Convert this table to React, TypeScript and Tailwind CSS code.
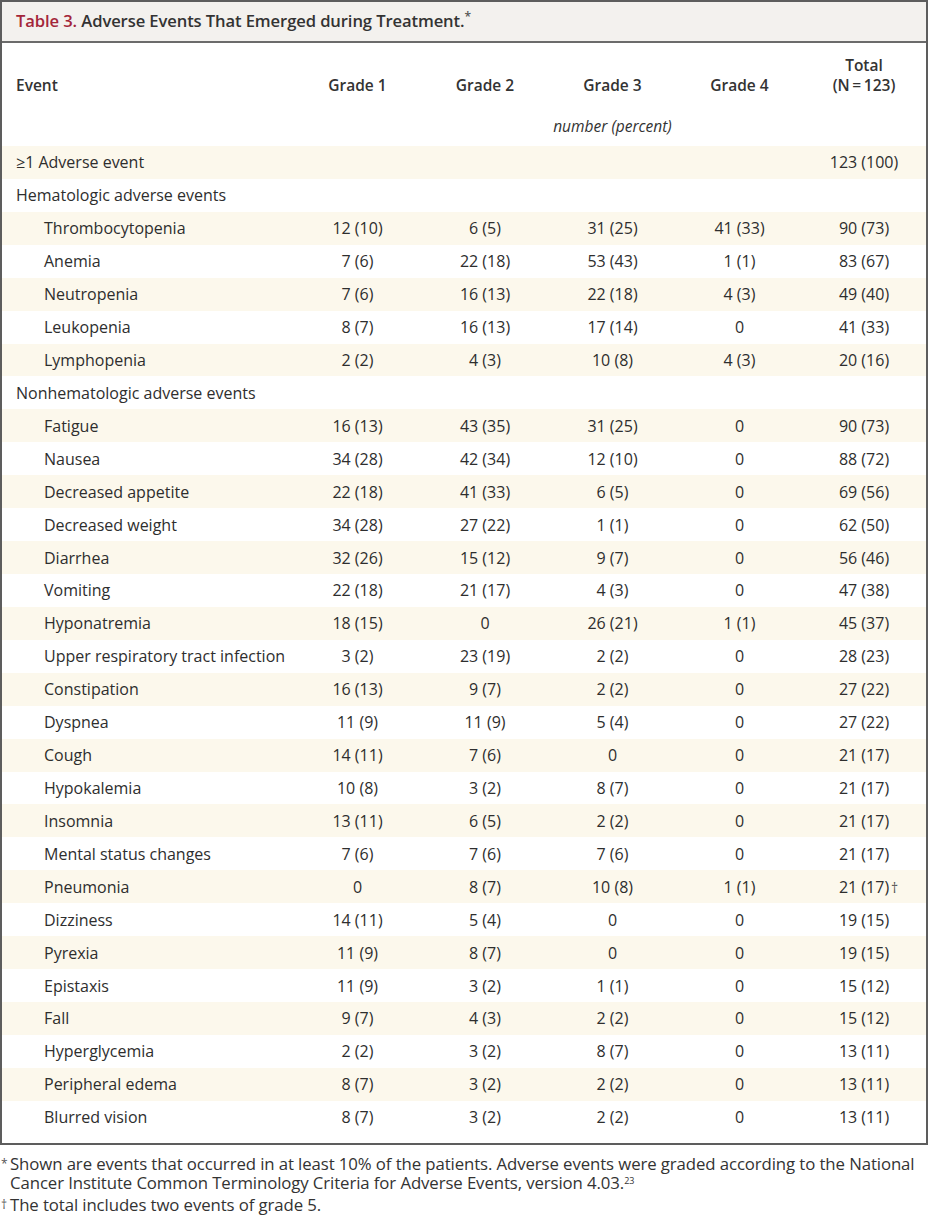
import React from "react";

type Row = { label: string; indent?: boolean; vals?: string[]; dagger?: boolean };

const rows: Row[] = [
  { label: "≥1 Adverse event", vals: ["", "", "", "", "123 (100)"] },
  { label: "Hematologic adverse events" },
  { label: "Thrombocytopenia", indent: true, vals: ["12 (10)", "6 (5)", "31 (25)", "41 (33)", "90 (73)"] },
  { label: "Anemia", indent: true, vals: ["7 (6)", "22 (18)", "53 (43)", "1 (1)", "83 (67)"] },
  { label: "Neutropenia", indent: true, vals: ["7 (6)", "16 (13)", "22 (18)", "4 (3)", "49 (40)"] },
  { label: "Leukopenia", indent: true, vals: ["8 (7)", "16 (13)", "17 (14)", "0", "41 (33)"] },
  { label: "Lymphopenia", indent: true, vals: ["2 (2)", "4 (3)", "10 (8)", "4 (3)", "20 (16)"] },
  { label: "Nonhematologic adverse events" },
  { label: "Fatigue", indent: true, vals: ["16 (13)", "43 (35)", "31 (25)", "0", "90 (73)"] },
  { label: "Nausea", indent: true, vals: ["34 (28)", "42 (34)", "12 (10)", "0", "88 (72)"] },
  { label: "Decreased appetite", indent: true, vals: ["22 (18)", "41 (33)", "6 (5)", "0", "69 (56)"] },
  { label: "Decreased weight", indent: true, vals: ["34 (28)", "27 (22)", "1 (1)", "0", "62 (50)"] },
  { label: "Diarrhea", indent: true, vals: ["32 (26)", "15 (12)", "9 (7)", "0", "56 (46)"] },
  { label: "Vomiting", indent: true, vals: ["22 (18)", "21 (17)", "4 (3)", "0", "47 (38)"] },
  { label: "Hyponatremia", indent: true, vals: ["18 (15)", "0", "26 (21)", "1 (1)", "45 (37)"] },
  { label: "Upper respiratory tract infection", indent: true, vals: ["3 (2)", "23 (19)", "2 (2)", "0", "28 (23)"] },
  { label: "Constipation", indent: true, vals: ["16 (13)", "9 (7)", "2 (2)", "0", "27 (22)"] },
  { label: "Dyspnea", indent: true, vals: ["11 (9)", "11 (9)", "5 (4)", "0", "27 (22)"] },
  { label: "Cough", indent: true, vals: ["14 (11)", "7 (6)", "0", "0", "21 (17)"] },
  { label: "Hypokalemia", indent: true, vals: ["10 (8)", "3 (2)", "8 (7)", "0", "21 (17)"] },
  { label: "Insomnia", indent: true, vals: ["13 (11)", "6 (5)", "2 (2)", "0", "21 (17)"] },
  { label: "Mental status changes", indent: true, vals: ["7 (6)", "7 (6)", "7 (6)", "0", "21 (17)"] },
  { label: "Pneumonia", indent: true, vals: ["0", "8 (7)", "10 (8)", "1 (1)", "21 (17)"], dagger: true },
  { label: "Dizziness", indent: true, vals: ["14 (11)", "5 (4)", "0", "0", "19 (15)"] },
  { label: "Pyrexia", indent: true, vals: ["11 (9)", "8 (7)", "0", "0", "19 (15)"] },
  { label: "Epistaxis", indent: true, vals: ["11 (9)", "3 (2)", "1 (1)", "0", "15 (12)"] },
  { label: "Fall", indent: true, vals: ["9 (7)", "4 (3)", "2 (2)", "0", "15 (12)"] },
  { label: "Hyperglycemia", indent: true, vals: ["2 (2)", "3 (2)", "8 (7)", "0", "13 (11)"] },
  { label: "Peripheral edema", indent: true, vals: ["8 (7)", "3 (2)", "2 (2)", "0", "13 (11)"] },
  { label: "Blurred vision", indent: true, vals: ["8 (7)", "3 (2)", "2 (2)", "0", "13 (11)"] },
];

const colW = ["w-[127px]", "w-[128px]", "w-[127px]", "w-[127px]", "w-[122px]"];

export default function App() {
  return (
    <div
      className="w-[930px] h-[1222px] bg-white text-[#2e2e2e]"
      style={{ fontFamily: '"Open Sans", "Noto Sans", sans-serif' }}
    >
      <div className="w-[928px] border-2 border-[#5d5d5d] bg-white">
        <div className="h-[41px] bg-[#f3f1ee] border-b-2 border-[#6b6b6b] flex items-center px-[14px]">
          <span className="text-[16.6px] font-semibold tracking-[-0.1px]">
            <span className="text-[#a3263a]">Table 3.</span>{" "}
            <span className="text-[#333]">Adverse Events That Emerged during Treatment.</span>
            <span className="text-[#555] text-[12px] align-top relative top-[-1px]">*</span>
          </span>
        </div>

        <div className="flex h-[70px] items-center text-[15.5px] font-semibold text-[#333]">
          <div className="w-[292px] pl-[14px] pt-[16px]">Event</div>
          <div className={`${colW[0]} text-center pt-[16px]`}>Grade 1</div>
          <div className={`${colW[1]} text-center pt-[16px]`}>Grade 2</div>
          <div className={`${colW[2]} text-center pt-[16px]`}>Grade 3</div>
          <div className={`${colW[3]} text-center pt-[16px]`}>Grade 4</div>
          <div className={`${colW[4]} text-center leading-[20px] relative top-[-3px]`}>
            <div>Total</div>
            <div>(N{"\u2009"}={"\u2009"}123)</div>
          </div>
        </div>
        <div className="flex h-[33px] items-center">
          <div className="w-[292px]" />
          <div className="w-[127px]" />
          <div className="w-[128px]" />
          <div className="w-[127px] text-center italic text-[15.5px] text-[#333] whitespace-nowrap relative top-[-3px]">
            number (percent)
          </div>
        </div>

        <div className="pb-[9px]">
          {rows.map((r, i) => (
            <div
              key={i}
              className={`flex h-[32.93px] items-center text-[16px] ${i % 2 === 0 ? "bg-[#fcf8ec]" : "bg-white"}`}
            >
              <div className={`w-[292px] whitespace-nowrap ${r.indent ? "pl-[42px]" : "pl-[14px]"}`}>{r.label}</div>
              {r.vals &&
                r.vals.map((v, j) => (
                  <div key={j} className={`${colW[j]} text-center whitespace-nowrap`}>
                    {j === 4 && r.dagger ? (
                      <span className="relative">
                        {v}
                        <span className="absolute left-full top-[1px] ml-[2px] text-[14px] text-[#555]">†</span>
                      </span>
                    ) : (
                      v
                    )}
                  </div>
                ))}
            </div>
          ))}
        </div>
      </div>

      <div className="pt-[9px] pl-[1px] text-[16.8px] leading-[19px] text-[#333] tracking-[-0.1px]">
        <div className="flex">
          <span className="w-[9px] shrink-0 text-[12px] text-[#555]">*</span>
          <span>
            Shown are events that occurred in at least 10% of the patients. Adverse events were graded according to the National
            <br />
            Cancer Institute Common Terminology Criteria for Adverse Events, version 4.03.
            <sup className="text-[9px]">23</sup>
          </span>
        </div>
        <div className="flex mt-[3px]">
          <span className="w-[9px] shrink-0 text-[12px] text-[#555]">†</span>
          <span>The total includes two events of grade 5.</span>
        </div>
      </div>
    </div>
  );
}
